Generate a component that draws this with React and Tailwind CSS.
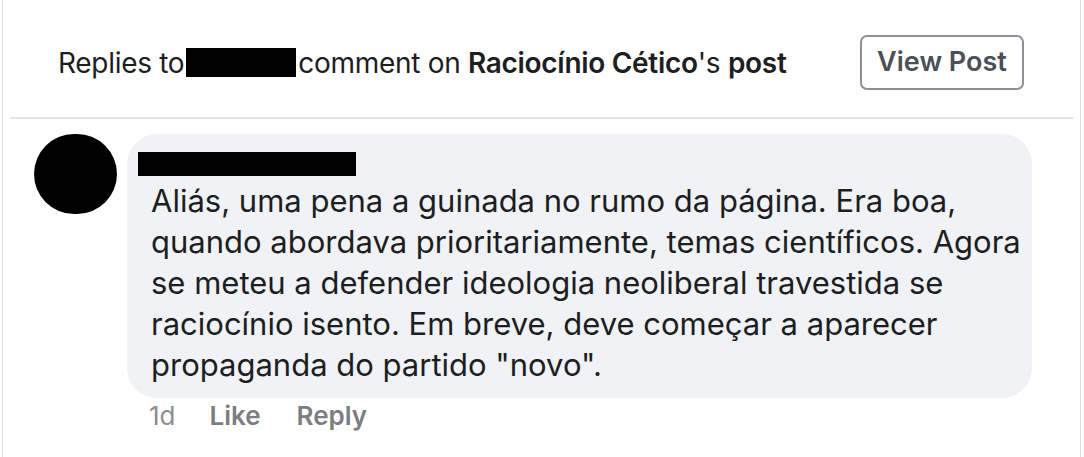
export default function App() {
  const font = { fontFamily: 'Inter, "Liberation Sans", sans-serif' };
  return (
    <div className="w-[1084px] h-[457px] bg-white overflow-hidden" style={font}>
      <div className="ml-[2px] mr-[3px] h-full border-x border-[#dcdde0] bg-white flex flex-col">
        <div className="h-[117px] flex items-center justify-between pl-[55px] pr-[56px] pt-[8px]">
          <div className="flex items-center text-[28px] text-[#1c1e21] tracking-[-0.3px]">
            <span>Replies to</span>
            <span className="inline-block w-[110px] h-[29px] bg-black mx-[2px]"></span>
            <span>comment on&nbsp;</span>
            <span className="font-semibold">Raciocínio Cético</span>
            <span>'s&nbsp;</span>
            <span className="font-semibold">post</span>
          </div>
          <button className="w-[164px] h-[55px] border-2 border-[#8d9096] rounded-[7px] text-[27px] font-semibold text-[#4b4f56]">
            View Post
          </button>
        </div>
        <div className="mx-[7px] h-[2px] bg-[#e4e5e8]"></div>
        <div className="flex pl-[31px] pt-[15px]">
          <div className="w-[83px] h-[80px] rounded-full bg-black shrink-0"></div>
          <div className="ml-[10px] flex flex-col">
            <div className="w-[905px] bg-[#f0f2f5] rounded-[30px] pl-[24px] pt-[18px] pb-[13px]">
              <div className="ml-[-13px] w-[218px] h-[24px] bg-black"></div>
              <div className="text-[31px] leading-[41px] text-[#1c1e21] mt-[4px]">
                Aliás, uma pena a guinada no rumo da página. Era boa,<br />
                quando abordava prioritariamente, temas científicos. Agora<br />
                se meteu a defender ideologia neoliberal travestida se<br />
                raciocínio isento. Em breve, deve começar a aparecer<br />
                propaganda do partido "novo".
              </div>
            </div>
            <div className="flex items-center pl-[22px] mt-[-2px] text-[26px]">
              <span className="text-[#8a8d91]">1d</span>
              <span className="ml-[34px] font-semibold text-[#7a7d82]">Like</span>
              <span className="ml-[36px] font-semibold text-[#7a7d82]">Reply</span>
            </div>
          </div>
        </div>
      </div>
    </div>
  );
}
